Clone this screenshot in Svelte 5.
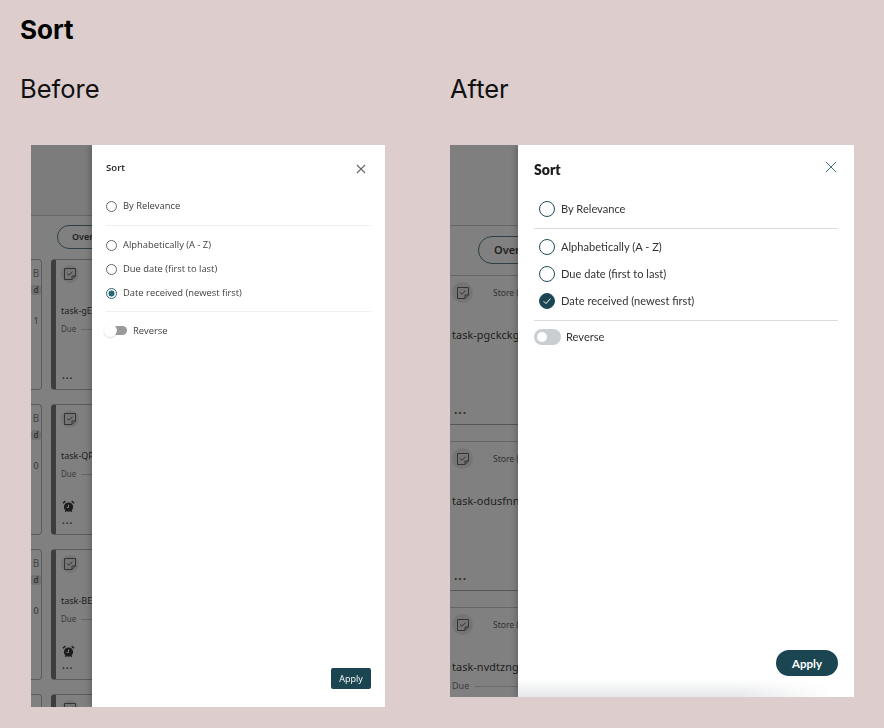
<script>
  const leftCards = [
    { id: 'task-gE', partial: '1', alarm: false },
    { id: 'task-QP', partial: '0', alarm: true },
    { id: 'task-BE', partial: '0', alarm: true }
  ];
  const rightRows = [
    { id: 'task-pgckckgp', due: false },
    { id: 'task-odusfnnr', due: false },
    { id: 'task-nvdtzngk', due: true }
  ];
  const opts = ['Alphabetically (A - Z)', 'Due date (first to last)', 'Date received (newest first)'];
</script>

{#snippet taskIcon()}
  <span class="icirc">
    <svg viewBox="0 0 14 14" width="14" height="14" fill="none" stroke="#333" stroke-width="1">
      <path d="M1.5 1.5h11v7.5l-3.5 3.5h-7.5z" />
      <path d="M12.5 9h-3.5v3.5" />
      <path d="M4.2 6.5l1.8 1.8 3.4-3.6" />
    </svg>
  </span>
{/snippet}

{#snippet alarm()}
  <svg class="alarm" viewBox="0 0 14 14" width="13" height="13">
    <circle cx="7" cy="7.6" r="5" fill="#1d1d1d" />
    <path d="M1 3.5l2.6-2.3M13 3.5l-2.6-2.3M3.5 12.6l1-1.2M10.5 12.6l-1-1.2" stroke="#1d1d1d" stroke-width="1.5" fill="none" />
    <path d="M7 5v3h-2" stroke="#8a8a8a" stroke-width="1" fill="none" />
  </svg>
{/snippet}

<main class="page">
  <h1>Sort</h1>
  <div class="cols">
    <section>
      <h2>Before</h2>
      <div class="frame frame-l">
        <div class="under under-l">
          <div class="topband-l"></div>
          <div class="pill-l">Over</div>
          <div class="cards-l">
            {#each leftCards as c}
              <div class="pair">
                <div class="side">
                  <span class="b">B</span>
                  <span class="d">d</span>
                  <span class="n">{c.partial}</span>
                </div>
                <div class="card-l">
                  {@render taskIcon()}
                  <div class="tid">{c.id}</div>
                  <div class="due"><span>Due</span><i></i></div>
                  <div class="alarm-slot">
                    {#if c.alarm}{@render alarm()}{/if}
                  </div>
                  <div class="dots">...</div>
                </div>
              </div>
            {/each}
            <div class="pair">
              <div class="side"></div>
              <div class="card-l">{@render taskIcon()}</div>
            </div>
          </div>
        </div>
        <aside class="panel panel-l">
          <header class="head-l">
            <span>Sort</span>
            <svg viewBox="0 0 10 10" width="10" height="10" stroke="#666" stroke-width="1.1" fill="none"><path d="M1 1l8 8M9 1l-8 8" /></svg>
          </header>
          <label class="opt-l first-l"><span class="radio-l"></span>By Relevance</label>
          <hr class="sep-l" />
          <div class="group-l">
            {#each opts as o, i}
              <label class="opt-l">
                <span class="radio-l" class:on={i === 2}></span>{o}
              </label>
            {/each}
          </div>
          <hr class="sep-l sep-l2" />
          <div class="rev-l">
            <span class="tog-l"><b></b></span>
            <span>Reverse</span>
          </div>
          <div class="foot-l"><button class="apply-l">Apply</button></div>
        </aside>
      </div>
    </section>

    <section>
      <h2>After</h2>
      <div class="frame frame-r">
        <div class="under under-r">
          <div class="topband-r"></div>
          <div class="pill-r">Over</div>
          {#each rightRows as r}
            <div class="row-r">
              <div class="row-top">{@render taskIcon()}<span>Store (</span></div>
              <div class="tid-r">{r.id}</div>
              {#if r.due}
                <div class="due-r"><span>Due</span><i></i></div>
              {:else}
                <div class="dots-r">...</div>
              {/if}
            </div>
          {/each}
        </div>
        <aside class="panel panel-r">
          <header class="head-r">
            <span>Sort</span>
            <svg viewBox="0 0 12 12" width="12" height="12" stroke="#2f5f6b" stroke-width=".9" fill="none"><path d="M.8.8l10.4 10.4M11.2.8L.8 11.2" /></svg>
          </header>
          <label class="opt-r first-r"><span class="radio-r"></span>By Relevance</label>
          <hr class="sep-r" />
          <div class="group-r">
            {#each opts as o, i}
              <label class="opt-r">
                <span class="radio-r" class:on={i === 2}>
                  {#if i === 2}
                    <svg viewBox="0 0 16 16" width="16" height="16" fill="none" stroke="#fff" stroke-width="1"><path d="M4.6 8.2l2.4 2.4 4.4-5" /></svg>
                  {/if}
                </span>{o}
              </label>
            {/each}
          </div>
          <hr class="sep-r sep-r2" />
          <div class="rev-r">
            <span class="tog-r"><b></b></span>
            <span>Reverse</span>
          </div>
          <div class="foot-r"><button class="apply-r">Apply</button></div>
          <div class="fade"></div>
        </aside>
      </div>
    </section>
  </div>
</main>

<style>
  :global(body) { margin: 0; background: #ddcdcd; }
  .page { width: 884px; height: 728px; box-sizing: border-box; padding: 15px 0 0 20px; overflow: hidden; font-family: Inter, sans-serif; color: #000; }
  h1 { margin: 0; font-size: 26px; line-height: 30px; font-weight: 700; }
  .cols { display: grid; grid-template-columns: 430px 404px; margin-top: 29px; }
  h2 { margin: 0; font-size: 25.5px; line-height: 30px; font-weight: 400; color: #111; }
  .frame { display: flex; margin-top: 41px; overflow: hidden; filter: blur(.35px); }
  .frame-l { width: 354px; height: 562px; margin-left: 11px; }
  .frame-r { width: 404px; height: 552px; }

  .under { flex: none; background: #808080; overflow: hidden; font-family: "Noto Sans", sans-serif; color: #1f1f1f; }
  .under-l { width: 61px; }
  .under-r { width: 68px; }
  .panel { flex: 1; position: relative; background: #fff; box-shadow: -2px 0 6px rgba(0,0,0,.22); }

  .topband-l { height: 70px; border-bottom: 1px solid #676767; background: #7c7c7c; }
  .pill-l { width: 80px; height: 22px; margin: 9px 0 0 26px; border: 1px solid #2c3f44; border-radius: 12px; font-size: 9px; font-weight: 600; line-height: 22px; padding-left: 14px; }
  .cards-l { margin-top: 10px; display: flex; flex-direction: column; gap: 14px; }
  .pair { display: flex; height: 131px; gap: 9px; flex: none; }
  .side { flex: none; width: 11px; box-sizing: border-box; border: 1px solid #5c5c5c; border-left: 0; border-radius: 0 4px 4px 0; font-size: 8px; color: #333; padding-top: 6px; }
  .side span { display: block; text-align: center; }
  .side .b { font-size: 10px; color: #444; }
  .side .d { margin-top: 5px; background: #717171; border-radius: 3px; height: 10px; line-height: 10px; font-weight: 600; }
  .side .n { margin-top: 19px; font-size: 9px; }
  .card-l { flex: none; width: 60px; box-sizing: border-box; border: 1px solid #5c5c5c; border-left: 5px solid #3d3d3d; border-right: 0; border-radius: 4px 0 0 4px; padding: 5px 0 0 5px; }
  .icirc { display: flex; width: 18px; height: 18px; border-radius: 50%; background: #757575; align-items: center; justify-content: center; }
  .tid { margin-top: 21px; font-size: 9px; line-height: 14px; white-space: nowrap; color: #1d1d1d; }
  .due { display: flex; align-items: center; gap: 5px; margin-top: 5px; font-size: 8px; line-height: 12px; color: #3b3b3b; }
  .due i { flex: 1; height: 1px; background: #666; }
  .alarm-slot { height: 13px; margin-top: 20px; display: flex; }
  .alarm-slot .alarm { margin-left: 1px; }
  .dots, .dots-r { font-size: 10px; line-height: 10px; font-weight: 700; letter-spacing: 1px; color: #2a2a2a; }
  .dots { margin: 2px 0 0 1px; }

  .topband-r { height: 80px; border-bottom: 1px solid #666; background: #7f7f7f; }
  .pill-r { width: 80px; height: 26px; margin: 10px 0 11px 28px; border: 1px solid #2c3f44; border-radius: 14px; font-size: 11px; font-weight: 600; line-height: 26px; padding-left: 15px; }
  .row-r { box-sizing: border-box; height: 150px; margin-bottom: 16px; padding: 6px 0 0 2px; border-top: 1px solid #666; border-bottom: 1px solid #555; }
  .row-top { display: flex; align-items: center; height: 21px; font-size: 8.5px; gap: 20px; white-space: nowrap; color: #303030; }
  .row-top .icirc { width: 21px; height: 21px; flex: none; }
  .tid-r { margin-top: 24px; font-size: 10.8px; line-height: 16px; white-space: nowrap; color: #1d1d1d; letter-spacing: .1px; }
  .dots-r { margin: 62px 0 0 2px; font-size: 12px; }
  .due-r { display: flex; align-items: center; gap: 6px; margin-top: 5px; font-size: 9px; line-height: 12px; color: #3b3b3b; }
  .due-r i { flex: 1; height: 1px; background: #6a6a6a; }

  /* left panel */
  .panel-l { box-sizing: border-box; padding: 0 14px; font-family: "Open Sans", sans-serif; font-size: 9.4px; color: #3d3d3d; display: flex; flex-direction: column; }
  .head-l { display: flex; justify-content: space-between; align-items: center; height: 46px; font-weight: 600; font-size: 9.6px; color: #222; }
  .head-l span { margin-top: -2px; }
  .head-l svg { margin-right: 5px; margin-top: 2px; }
  .opt-l { display: flex; align-items: center; gap: 6px; height: 12px; line-height: 12px; white-space: nowrap; }
  .first-l { margin-top: 9px; }
  .radio-l { box-sizing: border-box; flex: none; width: 11px; height: 11px; border: 1px solid #666; border-radius: 50%; background: #fff; }
  .radio-l.on { border-color: #2b6877; background: radial-gradient(circle, #2b6877 0 2.8px, #fff 3.3px); }
  .sep-l { width: 100%; margin: 13px 0 0; border: 0; height: 1px; background: #f0f0f0; }
  .group-l { display: flex; flex-direction: column; gap: 12px; margin-top: 13px; }
  .sep-l2 { margin-top: 12px; }
  .rev-l { display: flex; align-items: center; gap: 6px; height: 14px; margin-top: 11px; margin-left: -1px; }
  .tog-l { flex: none; position: relative; display: block; width: 22px; height: 9px; border-radius: 5px; background: #9a9a9a; }
  .tog-l b { position: absolute; left: -1px; top: -2px; width: 13px; height: 13px; border-radius: 50%; background: #fff; box-shadow: 0 1px 2px rgba(0,0,0,.15); }
  .foot-l { margin-top: auto; display: flex; justify-content: flex-end; padding-bottom: 18px; }
  .apply-l { width: 40px; height: 21px; padding: 0; border: 0; border-radius: 2px; background: #1b4551; color: #fff; font: 500 9px "Open Sans", sans-serif; }

  /* right panel */
  .panel-r { box-sizing: border-box; padding: 0 16px; font-family: Lato, sans-serif; font-size: 11.1px; color: #333; display: flex; flex-direction: column; overflow: hidden; }
  .head-r { display: flex; justify-content: space-between; align-items: center; height: 46px; font-size: 14px; font-weight: 800; color: #1c1c1c; }
  .head-r span { margin-top: 2px; }
  .head-r svg { margin-top: -3px; margin-right: 1px; }
  .opt-r { display: flex; align-items: center; gap: 6px; height: 17px; line-height: 17px; white-space: nowrap; margin-left: 5px; }
  .first-r { margin-top: 9px; }
  .radio-r { box-sizing: border-box; flex: none; display: flex; align-items: center; justify-content: center; width: 16px; height: 16px; border: 1px solid #1f4d59; border-radius: 50%; background: #fff; }
  .radio-r.on { background: #1b4551; }
  .radio-r.on svg { flex: none; }
  .sep-r { width: 100%; margin: 11px 0 0; border: 0; height: 1px; background: #d9dcde; }
  .group-r { display: flex; flex-direction: column; gap: 10px; margin-top: 9px; }
  .sep-r2 { margin-top: 11px; }
  .rev-r { display: flex; align-items: center; gap: 5px; height: 16px; margin-top: 8px; line-height: 14px; }
  .tog-r { flex: none; position: relative; display: block; width: 27px; height: 16px; border-radius: 8px; background: #c9ced2; }
  .tog-r b { position: absolute; left: 3px; top: 3px; width: 10px; height: 10px; border-radius: 50%; background: #fff; }
  .foot-r { margin-top: auto; display: flex; justify-content: flex-end; padding-bottom: 21px; position: relative; z-index: 1; }
  .apply-r { width: 62px; height: 26px; padding: 0; border: 0; border-radius: 13px; background: #1b4551; color: #fff; font: 700 11.5px Lato, sans-serif; }
  .fade { position: absolute; left: 0; right: 20px; bottom: 0; height: 18px; background: linear-gradient(to bottom, rgba(225,228,230,0), rgba(225,228,230,.85)); -webkit-mask-image: linear-gradient(to right, #000 70%, transparent); mask-image: linear-gradient(to right, #000 70%, transparent); }
</style>
